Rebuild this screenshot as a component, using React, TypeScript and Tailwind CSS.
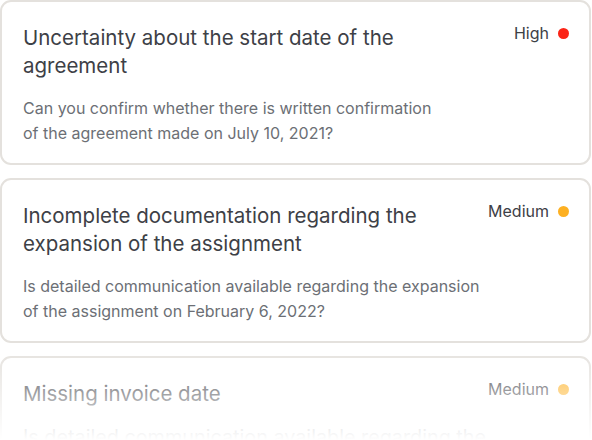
import React from 'react';

type Priority = 'High' | 'Medium';

interface Question {
  id: number;
  title: React.ReactNode;
  body: React.ReactNode;
  priority: Priority;
  large?: boolean;
}

const questions: Question[] = [
  {
    id: 1,
    title: (<>Uncertainty about the start date of the<br />agreement</>),
    body: (<>Can you confirm whether there is written confirmation<br />of the agreement made on July 10, 2021?</>),
    priority: 'High',
  },
  {
    id: 2,
    title: (<>Incomplete documentation regarding the<br />expansion of the assignment</>),
    body: (<>Is detailed communication available regarding the expansion<br />of the assignment on February 6, 2022?</>),
    priority: 'Medium',
  },
  {
    id: 3,
    title: 'Missing invoice date',
    body: (<>Is detailed communication available regarding the<br />expansion of the assignment?</>),
    priority: 'Medium',
    large: true,
  },
];

function PriorityTag({ level }: { level: Priority }) {
  return (
    <div className="flex items-center gap-[9px] shrink-0 -mt-[3px]">
      <span className="text-[16px] leading-6 text-[#3d4046]">{level}</span>
      <span
        className={
          level === 'High'
            ? 'size-[11px] rounded-full bg-[#fb2416]'
            : 'size-[11px] rounded-full bg-[#fdb022]'
        }
      />
    </div>
  );
}

export default function App() {
  return (
    <div
      className="relative h-[440px] w-[592px] overflow-hidden bg-white"
      style={{ fontFamily: 'Inter, "Noto Sans", sans-serif' }}
    >
      <div className="flex flex-col gap-[13px]">
        {questions.map((q) => (
          <div
            key={q.id}
            className="w-[591px] h-[165px] shrink-0 rounded-[11px] border-2 border-[#e4e1dd] bg-white pl-[21px] pr-[20px] pt-[22px]"
          >
            <div className="flex items-start justify-between">
              <h3 className="m-0 text-[20.5px] leading-[28px] font-normal text-[#3d4046]">
                {q.title}
              </h3>
              <PriorityTag level={q.priority} />
            </div>
            <p
              className={
                q.large
                  ? 'm-0 mt-[15px] text-[19.8px] leading-[28px] text-[#6c6f75]'
                  : 'm-0 mt-[16px] text-[16px] leading-[25px] text-[#6c6f75]'
              }
            >
              {q.body}
            </p>
          </div>
        ))}
      </div>

      {/* fade-out at the bottom */}
      <div className="pointer-events-none absolute inset-x-0 bottom-0 h-[95px] bg-gradient-to-b from-white/0 to-white" />
    </div>
  );
}
